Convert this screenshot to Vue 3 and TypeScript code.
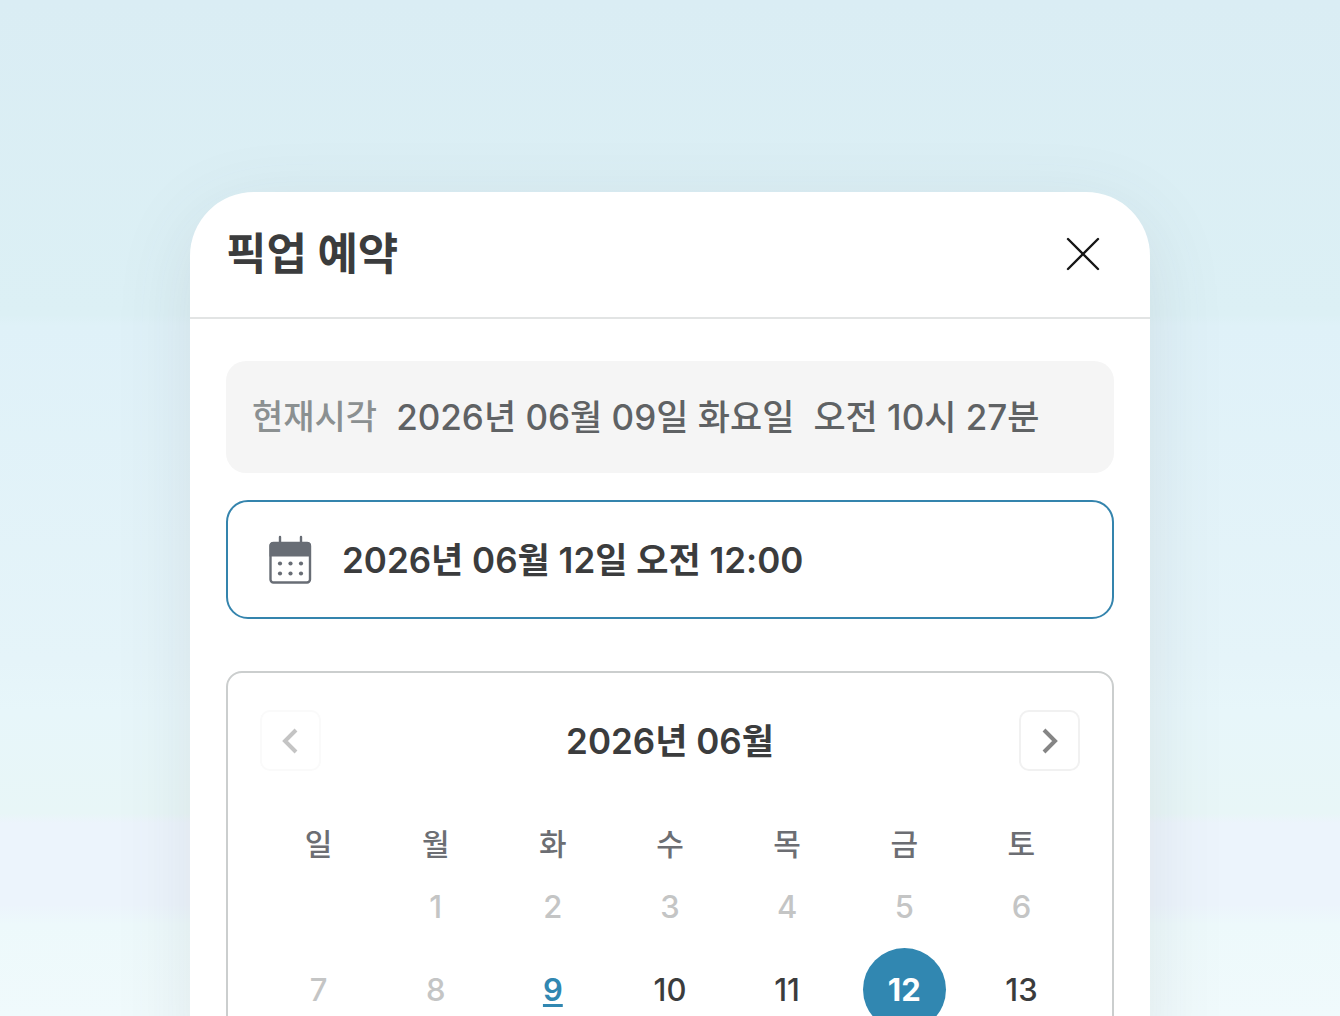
<script setup lang="ts">
import { ref } from 'vue'

interface Day {
  label: number | null
  state: 'empty' | 'past' | 'today' | 'open'
}

const weekdays: string[] = ['일', '월', '화', '수', '목', '금', '토']
const today = 9
const selected = ref<number>(12)
const pickup = ref<string>('2026년 06월 12일 오전 12:00')

const makeDay = (n: number): Day => {
  if (n < 1) return { label: null, state: 'empty' }
  if (n < today) return { label: n, state: 'past' }
  return { label: n, state: n === today ? 'today' : 'open' }
}

const weeks: Day[][] = [0, 1].map((w) => weekdays.map((_, d) => makeDay(w * 7 + d)))
</script>

<template>
  <main class="page">
    <section class="sheet" role="dialog" aria-labelledby="sheet-title">
      <header class="sheet-header">
        <h1 id="sheet-title">픽업 예약</h1>
        <button class="close" type="button" aria-label="닫기">
          <svg width="34" height="34" viewBox="0 0 34 34" fill="none" stroke="#161616" stroke-width="2.4" stroke-linecap="round">
            <path d="M2 2L32 32M32 2L2 32" />
          </svg>
        </button>
      </header>

      <div class="sheet-body">
        <p class="now">
          <span class="now-label">현재시각</span>
          <span>2026년 06월 09일 화요일</span>
          <span>오전 10시 27분</span>
        </p>

        <label class="field">
          <svg width="44" height="50" viewBox="0 0 44 50" aria-hidden="true">
            <path d="M12 2V9M33 2V9" stroke="#686d75" stroke-width="2.4" stroke-linecap="round" />
            <rect x="2.5" y="8" width="39.5" height="39.5" rx="3" fill="#fff" stroke="#686d75" stroke-width="2.4" />
            <path d="M1.500 21.500V10.500Q1.500 7 5 7H39.500Q43 7 43 10.500V21.500Z" fill="#686d75" />
            <g fill="#686d75">
              <circle cx="12" cy="28.500" r="2.1" />
              <circle cx="22.500" cy="28.500" r="2.1" />
              <circle cx="33" cy="28.500" r="2.1" />
              <circle cx="12" cy="38.500" r="2.1" />
              <circle cx="22.500" cy="38.500" r="2.1" />
              <circle cx="33" cy="38.500" r="2.1" />
            </g>
          </svg>
          <input v-model="pickup" type="text" aria-label="픽업 일시" />
        </label>

        <section class="calendar">
          <div class="calendar-nav">
            <button class="nav" type="button" aria-label="이전 달" disabled>
              <svg width="20" height="26" viewBox="0 0 20 26" fill="none" stroke="currentColor" stroke-width="4">
                <path d="M15 2L4 13L15 24" />
              </svg>
            </button>
            <h2>2026년 06월</h2>
            <button class="nav" type="button" aria-label="다음 달">
              <svg width="20" height="26" viewBox="0 0 20 26" fill="none" stroke="currentColor" stroke-width="4">
                <path d="M5 2L16 13L5 24" />
              </svg>
            </button>
          </div>
          <table>
            <thead>
              <tr>
                <th v-for="name in weekdays" :key="name" scope="col">{{ name }}</th>
              </tr>
            </thead>
            <tbody>
              <tr v-for="(week, w) in weeks" :key="w">
                <td v-for="(day, d) in week" :key="d">
                  <button
                    v-if="day.label !== null"
                    type="button"
                    class="day"
                    :class="[day.state, { selected: day.label === selected }]"
                    :disabled="day.state === 'past'"
                    @click="selected = day.label"
                  >{{ day.label }}</button>
                </td>
              </tr>
            </tbody>
          </table>
        </section>
      </div>
    </section>
  </main>
</template>

<style>
body {
  margin: 0;
}
</style>

<style scoped>
* {
  box-sizing: border-box;
}

.page {
  height: 100vh;
  overflow: hidden;
  padding: 192px 32px 0;
  background: linear-gradient(#daedf4 0%, #dcf0f5 31%, #dff1f8 32%, #e5f4f9 65%, #e7f6fa 70%, #e8f6f7 80%, #ecf4fc 81%, #ecf4fc 89%, #edf9fb 91%, #f0fafc 100%);
  font-family: Inter, "Noto Sans CJK KR", sans-serif;
  color: #3b3c3d;
}

button,
input {
  font: inherit;
  color: inherit;
  padding: 0;
  border: 0;
  background: none;
}

svg {
  display: block;
  flex: none;
}

h1,
h2,
p {
  margin: 0;
}

.sheet {
  max-width: 960px;
  min-height: 100%;
  margin: 0 auto;
  border-radius: 64px 64px 0 0;
  background: #fff;
  box-shadow: 0 20px 80px rgba(80, 80, 90, 0.11);
}

.sheet-header {
  display: flex;
  align-items: center;
  justify-content: space-between;
  height: 127px;
  padding: 0 50px 2px 36px;
  border-bottom: 2px solid #e2e4e4;
}

h1 {
  font-size: 44px;
  font-weight: 700;
  line-height: 56px;
}

.close {
  cursor: pointer;
}

.sheet-body {
  padding: 42px 36px 0;
}

.now {
  display: flex;
  align-items: center;
  gap: 19px;
  height: 112px;
  padding: 0 26px;
  border-radius: 20px;
  background: #f5f5f5;
  color: #5f6264;
  font-size: 35px;
  font-weight: 500;
  line-height: 48px;
  white-space: nowrap;
}

.now-label {
  color: #8b9091;
  font-size: 34px;
}

.field {
  display: flex;
  align-items: center;
  gap: 30px;
  height: 119px;
  margin-top: 27px;
  padding: 0 40px;
  border: 2px solid #3484ad;
  border-radius: 22px;
}

.field input {
  flex: 1;
  min-width: 0;
  height: 48px;
  outline: none;
  font-size: 35px;
  font-weight: 600;
  line-height: 48px;
}

.calendar {
  margin-top: 52px;
  padding: 37px 32px 40px;
  border: 2px solid #cbcece;
  border-radius: 16px;
}

.calendar-nav {
  display: flex;
  align-items: center;
  justify-content: space-between;
}

h2 {
  font-size: 35px;
  font-weight: 600;
  line-height: 48px;
}

.nav {
  display: grid;
  place-items: center;
  width: 61px;
  height: 61px;
  border: 2px solid #f1f1f1;
  border-radius: 10px;
  color: #858585;
  cursor: pointer;
}

.nav:disabled {
  border-color: #fafafa;
  color: #c4c4c4;
  cursor: default;
}

table {
  width: 100%;
  margin-top: 52px;
  border-collapse: collapse;
  table-layout: fixed;
}

th {
  height: 42px;
  padding: 0;
  color: #6c6e73;
  font-size: 30px;
  font-weight: 500;
  line-height: 42px;
}

td {
  height: 83px;
  padding: 0;
}

.day {
  display: block;
  width: 83px;
  height: 83px;
  margin: 0 auto;
  border-radius: 50%;
  font-size: 31px;
  font-weight: 500;
  cursor: pointer;
}

.day.past {
  color: #c4c5c5;
  cursor: default;
}

.day.today {
  color: #3187b1;
  font-weight: 600;
  text-decoration: underline;
  text-decoration-thickness: 3px;
  text-underline-offset: 3px;
}

.day.selected {
  background: #3187b1;
  color: #fff;
  font-weight: 700;
}
</style>
